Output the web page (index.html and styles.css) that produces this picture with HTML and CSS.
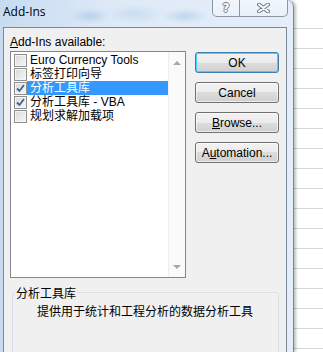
FILE: index.html
```html
<!DOCTYPE html>
<html lang="zh-CN">
<head>
    <meta charset="UTF-8">
    <meta name="viewport" content="width=device-width, initial-scale=1.0">
    <title>Add-Ins</title>
    <link rel="stylesheet" href="styles.css">
</head>
<body>
    <div class="dialog">
        <div class="titlebar">
            <span class="title">Add-Ins</span>
            <div class="caption-btns">
                <span class="cap-btn cap-help">?</span>
                <span class="cap-btn cap-close">
                    <svg width="13" height="10" viewBox="0 0 13 10">
                        <path d="M2 1.5 L11 8.5 M11 1.5 L2 8.5" stroke="#6f7c8a" stroke-width="4" stroke-linecap="round"/>
                        <path d="M2 1.5 L11 8.5 M11 1.5 L2 8.5" stroke="#ffffff" stroke-width="2" stroke-linecap="round"/>
                    </svg>
                </span>
            </div>
        </div>

        <div class="client">
            <div class="avail-label"><u>A</u>dd-Ins available:</div>

            <div class="main-row">
                <div class="listbox">
                    <ul class="items">
                        <li><span class="chk"></span><span class="item-text">Euro Currency Tools</span></li>
                        <li><span class="chk"></span><span class="item-text">标签打印向导</span></li>
                        <li class="selected"><span class="chk checked"></span><span class="item-text">分析工具库</span></li>
                        <li><span class="chk checked"></span><span class="item-text">分析工具库 - VBA</span></li>
                        <li><span class="chk"></span><span class="item-text">规划求解加载项</span></li>
                    </ul>
                    <div class="scrollbar">
                        <span class="arrow arrow-up"></span>
                        <span class="arrow arrow-down"></span>
                    </div>
                </div>

                <div class="buttons">
                    <button class="btn btn-default">OK</button>
                    <button class="btn">Cancel</button>
                    <button class="btn"><u>B</u>rowse...</button>
                    <button class="btn">A<u>u</u>tomation...</button>
                </div>
            </div>

            <fieldset class="desc">
                <legend>分析工具库</legend>
                <p>提供用于统计和工程分析的数据分析工具</p>
            </fieldset>
        </div>
    </div>
</body>
</html>
```

FILE: styles.css
```css
* {
    margin: 0;
    padding: 0;
    box-sizing: border-box;
}

body {
    font-family: 'Liberation Sans', 'Noto Sans CJK SC', sans-serif;
    font-size: 12px;
    color: #000000;
    width: 323px;
    height: 352px;
    overflow: hidden;
    background: repeating-linear-gradient(to bottom, #ffffff 0, #ffffff 19px, #d3d8d3 19px, #d3d8d3 20px);
    background-position: 0 9px;
}

.dialog {
    width: 294px;
    height: 352px;
    display: flex;
    flex-direction: column;
    padding: 0 6px 0 3px;
    border-right: 1px solid #7a8592;
    border-top-right-radius: 7px;
    box-shadow: 2px 0 3px rgba(0, 0, 0, 0.25);
    overflow: hidden;
    background:
        radial-gradient(ellipse 20px 8px at 90px 16px, rgba(150, 190, 230, 0.5), transparent),
        radial-gradient(ellipse 24px 8px at 185px 16px, rgba(150, 190, 230, 0.45), transparent),
        radial-gradient(ellipse 30px 10px at 135px 14px, rgba(170, 200, 235, 0.4), transparent),
        linear-gradient(to right, #c7dbf0 0, #dfeaf7 40%, #e4eef9 100%);
}

/* title bar */
.titlebar {
    flex: none;
    height: 27px;
    display: flex;
    align-items: flex-start;
    justify-content: space-between;
}

.title {
    font-family: 'Open Sans', 'Liberation Sans', sans-serif;
    font-size: 12px;
    line-height: 16px;
    padding-top: 4px;
    color: #000000;
}

.caption-btns {
    display: flex;
    height: 18px;
    margin-top: -1px;
    margin-right: -1px;
    border: 1px solid #8a97a6;
    border-top: none;
    border-radius: 0 0 5px 5px;
    background: linear-gradient(to bottom, rgba(255, 255, 255, 0.5), rgba(235, 242, 250, 0.8));
    overflow: hidden;
}

.cap-btn {
    display: flex;
    align-items: center;
    justify-content: center;
}

.cap-help {
    width: 27px;
    border-right: 1px solid #8a97a6;
    font-family: 'DejaVu Sans', sans-serif;
    font-weight: bold;
    font-size: 12px;
    color: #ffffff;
    text-shadow: -1px 0 #6f7c8a, 1px 0 #6f7c8a, 0 -1px #6f7c8a, 0 1px #6f7c8a;
}

.cap-close {
    width: 47px;
}

/* client area */
.client {
    flex: 1;
    width: 284px;
    border: 1px solid #7b8794;
    border-bottom: none;
    background: #f0f0f0;
}

.avail-label {
    padding: 7px 0 0 6px;
    line-height: 15px;
    height: 23px;
}

.main-row {
    display: flex;
    gap: 9px;
    padding-left: 6px;
}

.listbox {
    width: 176px;
    height: 227px;
    display: flex;
    border: 1px solid #828790;
    background: #ffffff;
}

.items {
    flex: 1;
    list-style: none;
    padding-top: 1px;
}

.items li {
    display: flex;
    align-items: center;
    height: 14px;
    padding-left: 3px;
    font-family: 'Liberation Sans', 'Noto Sans CJK SC', sans-serif;
    line-height: 14px;
    white-space: nowrap;
}

.item-text {
    flex: 1;
    padding-left: 3px;
    height: 14px;
}

.items li.selected .item-text {
    background: #3399ff;
    color: #ffffff;
}

.chk {
    width: 13px;
    height: 13px;
    flex: none;
    border: 1px solid #8e8f8f;
    background: linear-gradient(135deg, #d8d8d8, #f8f8f8);
    box-shadow: inset 0 0 0 1px #f4f4f4;
}

.chk.checked {
    background:
        url("data:image/svg+xml,%3Csvg xmlns='http://www.w3.org/2000/svg' width='11' height='11'%3E%3Cpath d='M2 5.5 L4.5 8 L9 2' fill='none' stroke='%234a5f97' stroke-width='1.8'/%3E%3C/svg%3E") center no-repeat,
        linear-gradient(135deg, #d8d8d8, #f8f8f8);
}

.scrollbar {
    width: 17px;
    display: flex;
    flex-direction: column;
    justify-content: space-between;
    align-items: center;
    padding: 9px 0 8px;
    background: #fafafa;
    border-left: 1px solid #eeeeee;
}

.arrow {
    width: 0;
    height: 0;
    border-left: 4px solid transparent;
    border-right: 4px solid transparent;
}

.arrow-up {
    border-bottom: 4px solid #a7a7a7;
}

.arrow-down {
    border-top: 4px solid #a7a7a7;
}

/* buttons */
.buttons {
    display: flex;
    flex-direction: column;
    gap: 9px;
    margin-top: 1px;
}

.btn {
    width: 84px;
    height: 21px;
    border: 1px solid #707070;
    border-radius: 3px;
    font-family: 'Liberation Sans', sans-serif;
    font-size: 12px;
    color: #000000;
    background: linear-gradient(to bottom, #f2f2f2 0, #ebebeb 50%, #dddddd 50%, #cfcfcf 100%);
    box-shadow: inset 0 0 0 1px rgba(255, 255, 255, 0.6);
}

.btn-default {
    border-color: #3c7fb1;
    box-shadow: inset 0 0 0 1px #48d0f7;
}

/* description group */
.desc {
    margin: 7px 7px 0 8px;
    padding: 0 0 0 24px;
    height: 80px;
    border: 1px solid #d5dfe5;
    border-radius: 3px;
    font-family: 'Noto Sans CJK SC', sans-serif;
}

.desc legend {
    margin-left: -22px;
    padding: 0 1px;
    line-height: 15px;
}

.desc p {
    margin-top: 3px;
    line-height: 15px;
}
```
